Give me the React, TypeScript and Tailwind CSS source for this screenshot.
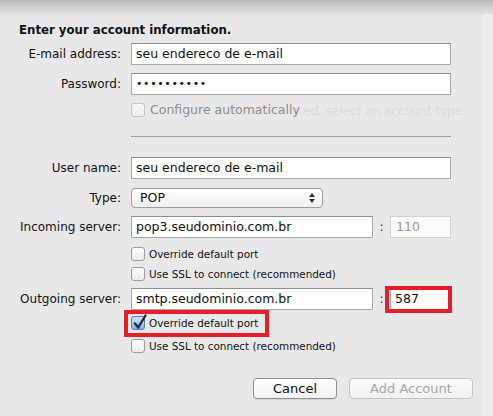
import React from "react";

function Check({ checked, disabled }: { checked?: boolean; disabled?: boolean }) {
  return (
    <div
      className={
        "relative w-[14px] h-[14px] rounded-[3px] border shrink-0 " +
        (checked
          ? "border-[#5a7fb0] bg-gradient-to-b from-[#d3e3f7] to-[#86b0e4]"
          : disabled
          ? "border-[#c4c4c4] bg-gradient-to-b from-[#f8f8f8] to-[#ececec]"
          : "border-[#9c9c9c] bg-gradient-to-b from-[#ffffff] to-[#ececec]")
      }
    >
      {checked && (
        <svg className="absolute left-[1px] -top-[3px]" width="14" height="16" viewBox="0 0 14 16">
          <path d="M2 9.5 L5.2 13.5 L12.5 1.5" fill="none" stroke="#1d2c4a" strokeWidth="2.4" strokeLinecap="round" strokeLinejoin="round" />
        </svg>
      )}
    </div>
  );
}

function Row({ label, children, className }: { label?: string; children: React.ReactNode; className?: string }) {
  return (
    <div className={"flex items-center " + (className || "")}>
      <div className="w-[122px] shrink-0 text-right pr-[1px] text-[12px] text-[#111] whitespace-nowrap">{label}</div>
      <div className="ml-[9px] flex items-center">{children}</div>
    </div>
  );
}

function Field({ value, w, className }: { value: string; w: string; className?: string }) {
  return (
    <div
      className={
        "h-[22px] border border-[#a9a9a9] border-t-[#8f8f8f] bg-white flex items-center pl-[4px] text-[#111] whitespace-nowrap " +
        w +
        " " +
        (className || "")
      }
    >
      {value}
    </div>
  );
}

export default function App() {
  return (
    <div className="relative w-[493px] h-[416px] overflow-hidden bg-[#e8e8e8] text-[12.5px] leading-[14px] font-['DejaVu_Sans','Liberation_Sans',sans-serif]">
      <div className="absolute left-0 top-0 w-full h-[16px] bg-gradient-to-b from-[#b9b9b9] to-[#e8e8e8]" />
      <div className="absolute right-0 top-[14px] w-[10px] h-[402px] bg-[#ececec]" />
      <div className="absolute left-[303px] top-[104px] text-[12px] text-[#dbdbdb] whitespace-nowrap">ed, select an account type.</div>

      <div className="relative pt-[22px]">
        <div className="pl-[19px] h-[16px] leading-[16px] text-[11.75px] font-bold text-[#111]">Enter your account information.</div>

        <Row label="E-mail address:" className="mt-[5px]">
          <Field value="seu endereco de e-mail" w="w-[320px]" />
        </Row>
        <Row label="Password:" className="mt-[8px]">
          <Field value="••••••••••" w="w-[320px]" className="text-[11px] tracking-[0.6px]" />
        </Row>
        <Row className="mt-[8px] h-[14px]">
          <Check disabled />
          <span className="ml-[5px] text-[#8c8c8c]">Configure automatically</span>
        </Row>
        <div className="ml-[131px] mt-[19px] w-[320px] h-[1px] bg-[#9e9e9e]" />

        <Row label="User name:" className="mt-[20px]">
          <Field value="seu endereco de e-mail" w="w-[320px]" />
        </Row>
        <Row label="Type:" className="mt-[9px]">
          <div className="w-[192px] h-[20px] rounded-[4px] border border-[#9c9c9c] bg-gradient-to-b from-[#ffffff] to-[#f0f0f0] flex items-center pl-[8px] text-[#111]">
            <span className="flex-1">POP</span>
            <svg width="8" height="12" viewBox="0 0 8 12" className="mr-[6px]">
              <path d="M1 5 L4 1 L7 5 Z" fill="#333" />
              <path d="M1 7 L4 11 L7 7 Z" fill="#333" />
            </svg>
          </div>
        </Row>
        <Row label="Incoming server:" className="mt-[8px]">
          <Field value="pop3.seudominio.com.br" w="w-[242px]" />
          <span className="w-[17px] text-center text-[#333]">:</span>
          <div className="h-[22px] w-[61px] border border-[#d2d2d2] bg-[#fbfbfb] flex items-center pl-[5px] text-[#9a9a9a]">110</div>
        </Row>
        <Row className="mt-[9px] h-[13px]">
          <Check />
          <span className="ml-[4px] text-[10.4px] text-[#111] whitespace-nowrap">Override default port</span>
        </Row>
        <Row className="mt-[7px] h-[13px]">
          <Check />
          <span className="ml-[4px] text-[10.4px] text-[#111] whitespace-nowrap">Use SSL to connect (recommended)</span>
        </Row>
        <Row label="Outgoing server:" className="mt-[8px]">
          <Field value="smtp.seudominio.com.br" w="w-[242px]" />
          <span className="w-[17px] text-center text-[#333]">:</span>
          <div className="relative">
            <Field value="587" w="w-[61px]" />
            <div className="absolute -left-[5px] -top-[2px] w-[67px] h-[27px] border-[4px] border-[#e5202b]" />
          </div>
        </Row>
        <Row className="mt-[6px] h-[14px]">
          <div className="relative flex items-center">
            <Check checked />
            <span className="ml-[4px] text-[10.4px] text-[#111] whitespace-nowrap">Override default port</span>
            <div className="absolute -left-[7px] -top-[6px] w-[145px] h-[27px] border-[4px] border-[#e5202b]" />
          </div>
        </Row>
        <Row className="mt-[9px] h-[13px]">
          <Check />
          <span className="ml-[4px] text-[10.4px] text-[#111] whitespace-nowrap">Use SSL to connect (recommended)</span>
        </Row>

        <div className="mt-[26px] flex pl-[253px] text-[13px]">
          <div className="w-[84px] h-[21px] rounded-[4px] border border-[#8e8e8e] bg-gradient-to-b from-[#ffffff] to-[#f1f1f1] flex items-center justify-center text-[#111] shadow-[0_1px_0_rgba(0,0,0,0.08)]">
            Cancel
          </div>
          <div className="ml-[12px] w-[124px] h-[21px] rounded-[4px] border border-[#c3c3c3] bg-gradient-to-b from-[#fafafa] to-[#f1f1f1] flex items-center justify-center text-[#a6a6a6]">
            Add Account
          </div>
        </div>
      </div>
    </div>
  );
}
